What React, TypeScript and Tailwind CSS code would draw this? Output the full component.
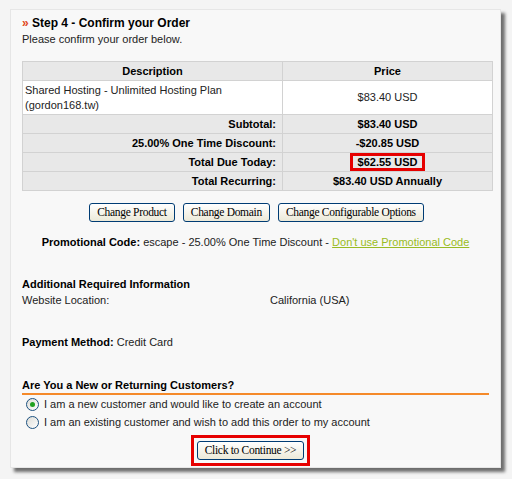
import React from "react";

const font = { fontFamily: '"Liberation Sans", Arial, sans-serif' };

const Radio = ({ checked }: { checked?: boolean }) => (
  <span className="w-[13px] h-[13px] rounded-full border border-[#1c5180] bg-gradient-to-br from-[#dcdcd7] to-white flex items-center justify-center shrink-0">
    {checked && <span className="w-[5px] h-[5px] rounded-full bg-[#21a121]" />}
  </span>
);

const XpButton = ({ label }: { label: string }) => (
  <button className="h-[19px] px-[7px] border border-[#003c74] rounded-[3px] bg-gradient-to-b from-white to-[#ece9d8] text-[11.5px] leading-none text-black font-['Liberation_Serif',serif] tracking-[-0.3px]">
    {label}
  </button>
);

const totals = [
  { label: "Subtotal:", value: "$83.40 USD" },
  { label: "25.00% One Time Discount:", value: "-$20.85 USD" },
  { label: "Total Due Today:", value: "$62.55 USD", mark: true },
  { label: "Total Recurring:", value: "$83.40 USD Annually" },
];

export default function App() {
  return (
    <div className="w-[512px] h-[479px] bg-[#f4f4f4] pt-[9px] pl-[10px] text-[11px] text-[#222]" style={font}>
      <div className="w-[491px] h-[459px] bg-[#f8f8f8] border border-[#e6e6e6] shadow-[4px_4px_3px_rgba(0,0,0,0.55)] px-[11px] pt-[5px]">
        <div className="text-[12px] font-bold text-black leading-[16px]">
          <span className="text-[#e0451b]">»</span> Step 4 - Confirm your Order
        </div>
        <div className="leading-[14px] mt-[1px]">Please confirm your order below.</div>

        <table className="mt-[15px] w-[471px] border-collapse border border-[#c8c8c8]">
          <thead>
            <tr className="h-[19px] bg-[#e8e8e8] font-bold text-black">
              <th className="w-[260px] border border-[#d2d2d2]">Description</th>
              <th className="border border-[#d2d2d2]">Price</th>
            </tr>
          </thead>
          <tbody>
            <tr className="h-[34px] bg-white">
              <td className="border border-[#d2d2d2] px-[2px] leading-[15px] text-left">
                Shared Hosting - Unlimited Hosting Plan
                <br />
                (gordon168.tw)
              </td>
              <td className="border border-[#d2d2d2] text-center">$83.40 USD</td>
            </tr>
            {totals.map((t) => (
              <tr key={t.label} className="h-[19px] bg-[#e8e8e8] font-bold text-black">
                <td className="border border-[#d2d2d2] text-right pr-[6px]">{t.label}</td>
                <td className="border border-[#d2d2d2] text-center">
                  {t.mark ? (
                    <span className="inline-block border-[3px] border-[#e60000] px-[5px] leading-[12px]">{t.value}</span>
                  ) : (
                    t.value
                  )}
                </td>
              </tr>
            ))}
          </tbody>
        </table>

        <div className="flex justify-center gap-[8px] mt-[12px] pl-[2px]">
          <XpButton label="Change Product" />
          <XpButton label="Change Domain" />
          <XpButton label="Change Configurable Options" />
        </div>

        <div className="text-center mt-[13px] leading-[14px]">
          <b className="text-black">Promotional Code:</b> escape - 25.00% One Time Discount -{" "}
          <a className="underline text-[#99bb22]">Don't use Promotional Code</a>
        </div>

        <div className="mt-[28px] font-bold text-black leading-[14px]">Additional Required Information</div>
        <div className="flex leading-[14px] mt-[2px]">
          <span className="w-[248px]">Website Location:</span>
          <span>California (USA)</span>
        </div>

        <div className="mt-[28px] leading-[14px]">
          <b className="text-black">Payment Method:</b> Credit Card
        </div>

        <div className="mt-[29px] font-bold text-black leading-[14px] pb-[1px]">
          Are You a New or Returning Customers?
        </div>
        <div className="h-[2px] bg-[#f58a2a]" />
        <div className="flex items-center gap-[5px] pl-[4px] mt-[1px] h-[17px]">
          <Radio checked />
          <span>I am a new customer and would like to create an account</span>
        </div>
        <div className="flex items-center gap-[5px] pl-[4px] mt-[1px] h-[17px]">
          <Radio />
          <span>I am an existing customer and wish to add this order to my account</span>
        </div>

        <div className="flex justify-center mt-[4px] pr-[10px]">
          <div className="border-[3px] border-[#e60000] px-[3px] py-[3px]">
            <XpButton label="Click to Continue >>" />
          </div>
        </div>
      </div>
    </div>
  );
}
